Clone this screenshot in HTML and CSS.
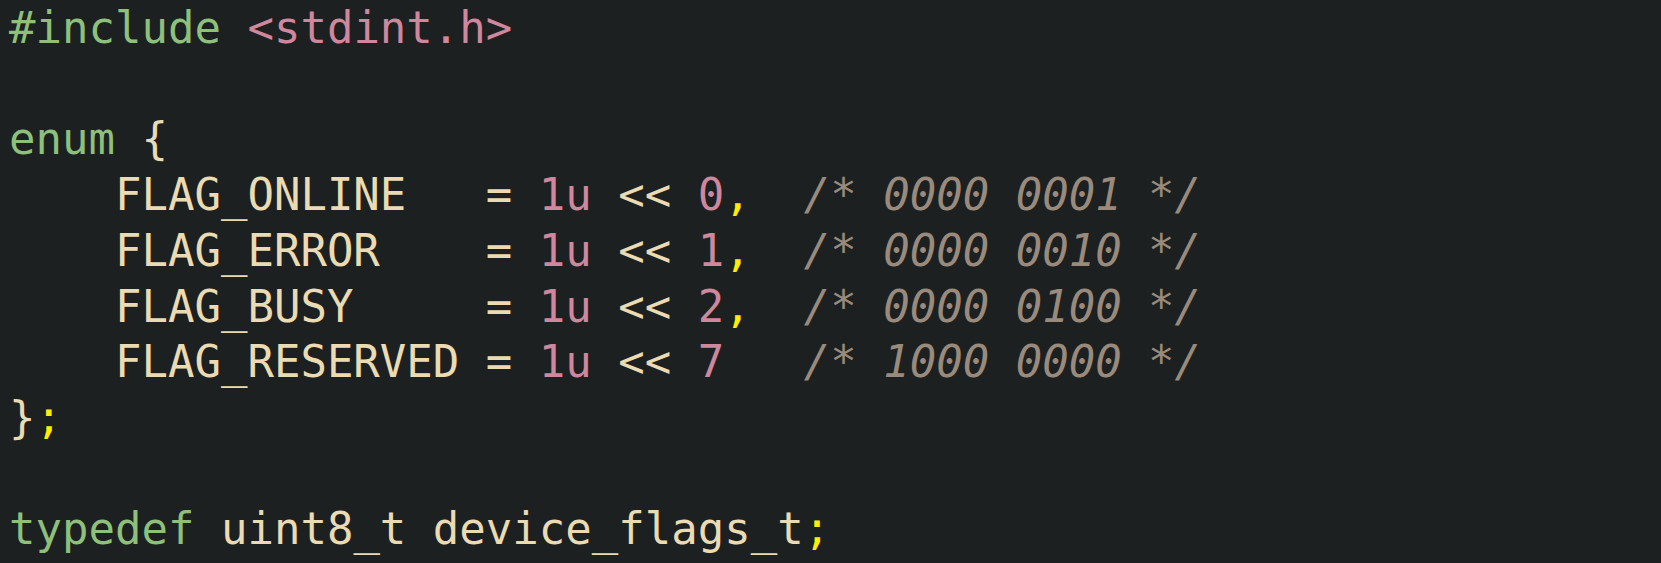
FILE: index.html
```html
<!DOCTYPE html>
<html>
<head>
<meta charset="utf-8">
<link rel="stylesheet" href="styles.css">
</head>
<body>
<pre class="code"><span class="kw">#include</span> <span class="str">&lt;stdint.h&gt;</span>

<span class="kw">enum</span> {
    FLAG_ONLINE   = <span class="num">1u</span> &lt;&lt; <span class="num">0</span><span class="pun">,</span>  <span class="cm">/* 0000 0001 */</span>
    FLAG_ERROR    = <span class="num">1u</span> &lt;&lt; <span class="num">1</span><span class="pun">,</span>  <span class="cm">/* 0000 0010 */</span>
    FLAG_BUSY     = <span class="num">1u</span> &lt;&lt; <span class="num">2</span><span class="pun">,</span>  <span class="cm">/* 0000 0100 */</span>
    FLAG_RESERVED = <span class="num">1u</span> &lt;&lt; <span class="num">7</span>   <span class="cm">/* 1000 0000 */</span>
}<span class="pun">;</span>

<span class="kw">typedef</span> uint8_t device_flags_t<span class="pun">;</span></pre>
</body>
</html>
```

FILE: styles.css
```css
html, body {
  margin: 0;
  padding: 0;
  background: #1d2021;
  height: 100%;
}
.code {
  margin: 0;
  padding: 0 9px;
  font-family: "DejaVu Sans Mono", "Liberation Mono", monospace;
  font-size: 44px;
  line-height: 55.7px;
  color: #ebdbb2;
  white-space: pre;
}
.kw { color: #8ec07c; }
.str { color: #cf879d; }
.num { color: #cf879d; }
.pun { color: #ffee00; }
.cm { color: #998a7b; font-style: italic; }
```
